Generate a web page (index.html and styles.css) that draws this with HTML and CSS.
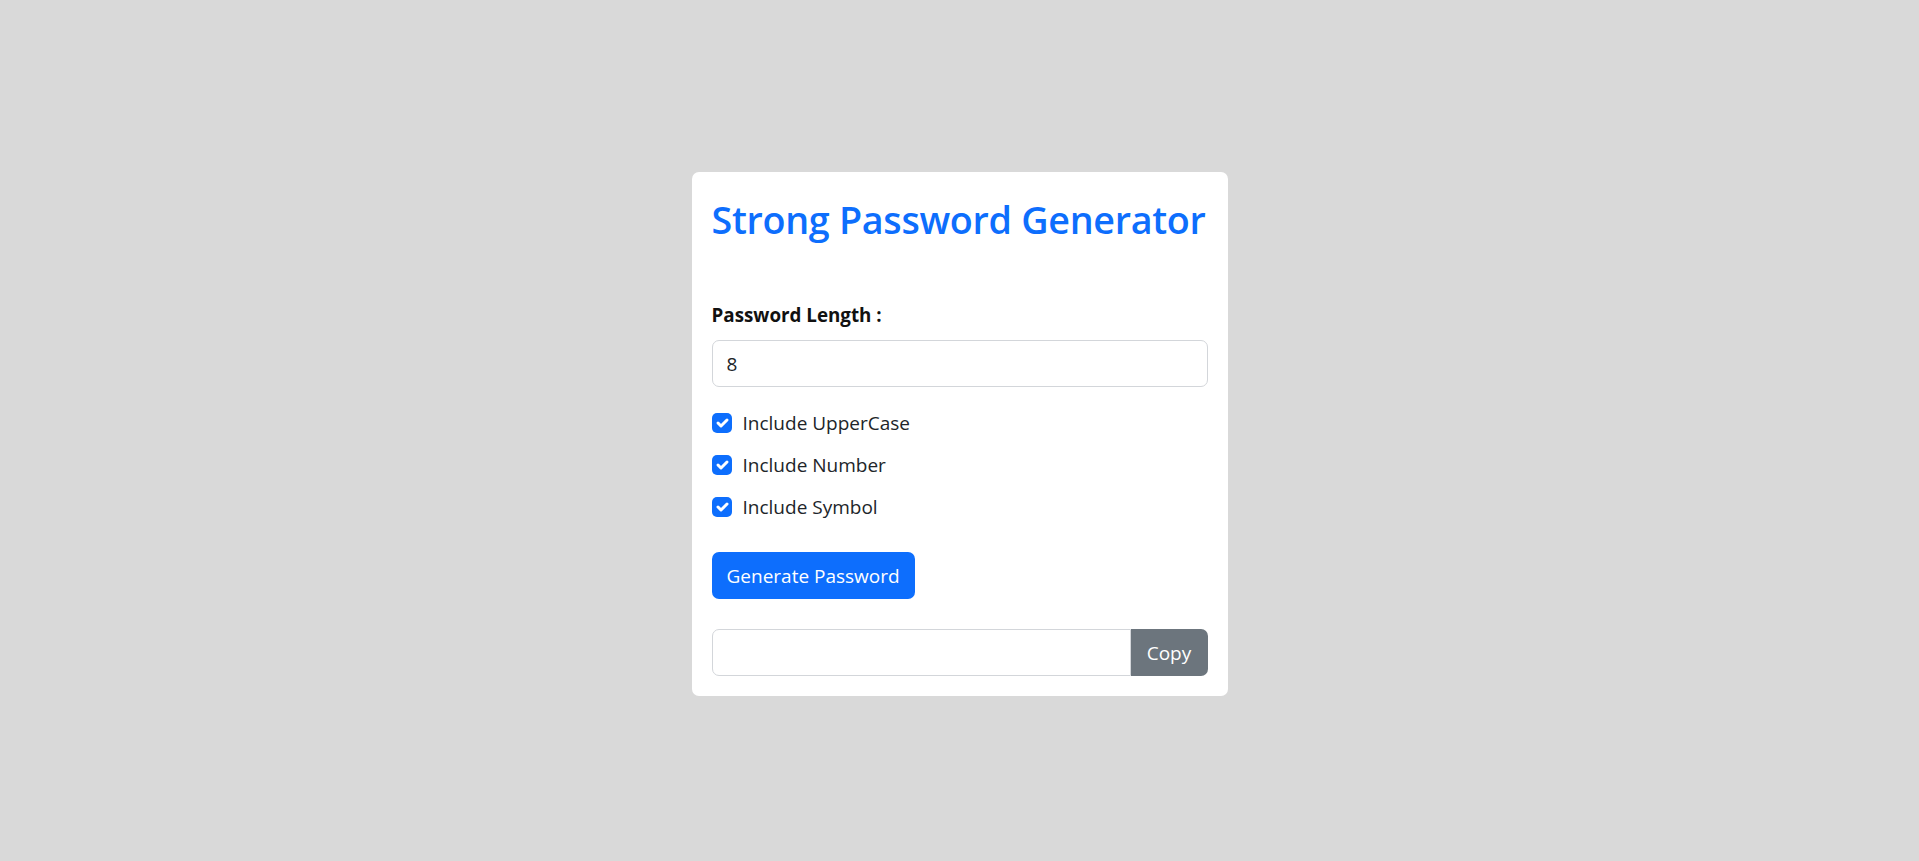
FILE: index.html
```html
<!DOCTYPE html>
<html lang="en">
<head>
<meta charset="utf-8">
<title>Strong Password Generator</title>
<link rel="stylesheet" href="styles.css">
</head>
<body>
<main class="page">
  <section class="card">
    <h1 class="title">Strong Password Generator</h1>
    <form class="form">
      <label class="field-label" for="len">Password Length :</label>
      <input class="text-input" id="len" type="text" value="8">
      <div class="checks">
        <label class="check">
          <span class="box"><svg viewBox="0 0 20 20" width="20" height="20"><path d="M6 10l3 3 6-6" fill="none" stroke="#fff" stroke-width="3" stroke-linecap="round" stroke-linejoin="round"/></svg></span>
          <span class="check-text">Include UpperCase</span>
        </label>
        <label class="check">
          <span class="box"><svg viewBox="0 0 20 20" width="20" height="20"><path d="M6 10l3 3 6-6" fill="none" stroke="#fff" stroke-width="3" stroke-linecap="round" stroke-linejoin="round"/></svg></span>
          <span class="check-text">Include Number</span>
        </label>
        <label class="check">
          <span class="box"><svg viewBox="0 0 20 20" width="20" height="20"><path d="M6 10l3 3 6-6" fill="none" stroke="#fff" stroke-width="3" stroke-linecap="round" stroke-linejoin="round"/></svg></span>
          <span class="check-text">Include Symbol</span>
        </label>
      </div>
      <div class="actions">
        <button type="button" class="btn-primary">Generate Password</button>
      </div>
      <div class="output-group">
        <input class="output-input" type="text" value="">
        <button type="button" class="btn-copy">Copy</button>
      </div>
    </form>
  </section>
</main>
</body>
</html>
```

FILE: styles.css
```css
* { box-sizing: border-box; }
html, body { margin: 0; padding: 0; }
body {
  background: #d9d9d9;
  font-family: "Open Sans", "Noto Sans", "Liberation Sans", sans-serif;
  font-size: 19px;
  color: #212529;
  min-height: 861px;
}
.page {
  display: flex;
  justify-content: center;
  padding-top: 172px;
}
.card {
  width: 536px;
  background: #fff;
  border-radius: 7px;
  padding: 20px;
}
.title {
  margin: 6px 0 0;
  font-size: 37.7px;
  font-weight: 600;
  line-height: 44px;
  color: #0d6efd;
  letter-spacing: -0.3px;
  white-space: nowrap;
}
.form {
  display: flex;
  flex-direction: column;
  margin-top: 58px;
}
.field-label {
  font-weight: 700;
  font-size: 18.8px;
  line-height: 30px;
  color: #111;
  margin-bottom: 10px;
}
.text-input, .output-input {
  font: inherit;
  color: #212529;
  height: 47px;
  border: 1px solid #d3d6da;
  border-radius: 7px;
  padding: 0 14px;
  outline: none;
  background: #fff;
}
.checks {
  display: flex;
  flex-direction: column;
  gap: 12px;
  margin-top: 21px;
}
.check {
  display: flex;
  align-items: center;
  gap: 11px;
  height: 30px;
}
.box {
  width: 20px;
  height: 20px;
  border-radius: 5px;
  background: #0d6efd;
  display: flex;
}
.check-text { line-height: 30px; }
.actions {
  display: flex;
  margin-top: 30px;
}
.btn-primary {
  font: inherit;
  height: 47px;
  padding: 0 15px;
  border: none;
  border-radius: 7px;
  background: #0d6efd;
  color: #fff;
}
.output-group {
  display: flex;
  margin-top: 30px;
}
.output-input {
  flex: 1;
  min-width: 0;
  border-radius: 7px 0 0 7px;
}
.btn-copy {
  font: inherit;
  width: 77px;
  height: 47px;
  border: none;
  border-radius: 0 7px 7px 0;
  background: #6c757d;
  color: #fff;
}
```
